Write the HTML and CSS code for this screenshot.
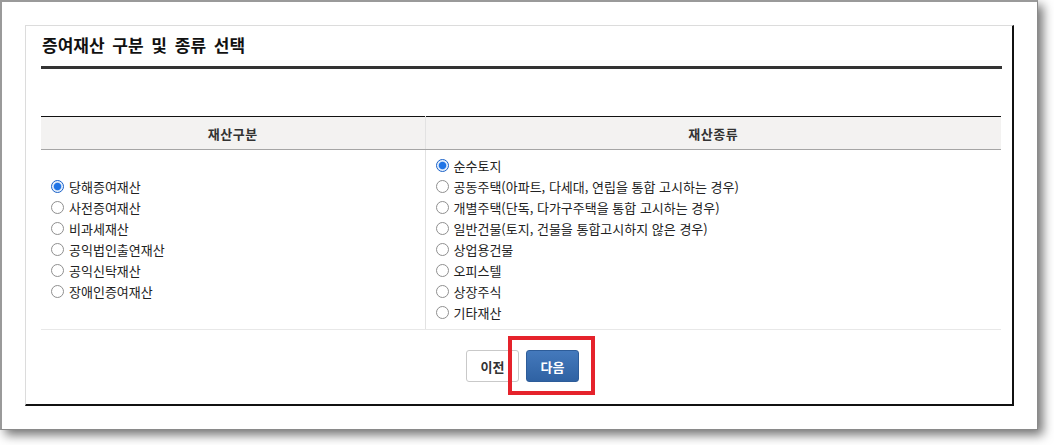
FILE: index.html
```html
<!DOCTYPE html>
<html lang="ko">
<head>
<meta charset="utf-8">
<title>증여재산 구분 및 종류 선택</title>
<link rel="stylesheet" href="styles.css">
</head>
<body>
<div class="window">
  <div class="panel">
    <h2 class="title">증여재산 구분 및 종류 선택</h2>
    <div class="spacer"></div>
    <table class="grid">
      <colgroup>
        <col class="c-left">
        <col class="c-right">
      </colgroup>
      <thead>
        <tr>
          <th class="col-left">재산구분</th>
          <th class="col-right">재산종류</th>
        </tr>
      </thead>
      <tbody>
        <tr>
          <td class="col-left">
            <ul class="opts">
              <li><label><input type="radio" name="gubun" checked><span>당해증여재산</span></label></li>
              <li><label><input type="radio" name="gubun"><span>사전증여재산</span></label></li>
              <li><label><input type="radio" name="gubun"><span>비과세재산</span></label></li>
              <li><label><input type="radio" name="gubun"><span>공익법인출연재산</span></label></li>
              <li><label><input type="radio" name="gubun"><span>공익신탁재산</span></label></li>
              <li><label><input type="radio" name="gubun"><span>장애인증여재산</span></label></li>
            </ul>
          </td>
          <td class="col-right">
            <ul class="opts">
              <li><label><input type="radio" name="jongryu" checked><span>순수토지</span></label></li>
              <li><label><input type="radio" name="jongryu"><span>공동주택(아파트, 다세대, 연립을 통합 고시하는 경우)</span></label></li>
              <li><label><input type="radio" name="jongryu"><span>개별주택(단독, 다가구주택을 통합 고시하는 경우)</span></label></li>
              <li><label><input type="radio" name="jongryu"><span>일반건물(토지, 건물을 통합고시하지 않은 경우)</span></label></li>
              <li><label><input type="radio" name="jongryu"><span>상업용건물</span></label></li>
              <li><label><input type="radio" name="jongryu"><span>오피스텔</span></label></li>
              <li><label><input type="radio" name="jongryu"><span>상장주식</span></label></li>
              <li><label><input type="radio" name="jongryu"><span>기타재산</span></label></li>
            </ul>
          </td>
        </tr>
      </tbody>
    </table>
    <div class="actions">
      <button class="btn btn-prev" type="button">이전</button>
      <button class="btn btn-next" type="button">다음</button>
      <span class="highlight"></span>
    </div>
  </div>
</div>
</body>
</html>
```

FILE: styles.css
```css
html, body {
  margin: 0;
  padding: 0;
  background: #ffffff;
}

body {
  font-family: "Noto Sans CJK KR", "Noto Sans", sans-serif;
  color: #333;
  width: 1054px;
  height: 445px;
  overflow: hidden;
}

.window {
  box-sizing: border-box;
  width: 1038px;
  height: 430px;
  background: #fff;
  border-top: 2px solid #9a9a9a;
  border-left: 2px solid #9a9a9a;
  border-right: 1px solid #8a8a8a;
  border-bottom: 1px solid #8a8a8a;
  box-shadow: 5px 5px 10px rgba(0, 0, 0, 0.55);
  padding: 23px 0 0 23px;
}

.panel {
  box-sizing: border-box;
  width: 989px;
  height: 381px;
  border-top: 1px solid #dcdcdc;
  border-left: 1px solid #dcdcdc;
  border-right: 2px solid #111;
  border-bottom: 2px solid #111;
  padding: 0 10px 0 15px;
  display: flex;
  flex-direction: column;
}

.title {
  margin: 0;
  padding: 7px 0 0 1px;
  height: 33px;
  font-size: 17px;
  font-weight: bold;
  color: #111;
  line-height: 24px;
  border-bottom: 3px solid #333;
  word-spacing: 3px;
}

.spacer {
  height: 47px;
}

.grid {
  width: 960px;
  table-layout: fixed;
  border-collapse: collapse;
  border-top: 1px solid #111;
  font-size: 13px;
}

.grid .c-left {
  width: 384px;
}

.grid th {
  height: 32px;
  padding: 0;
  background: #f3f2f1;
  border-bottom: 1px solid #a5a5a5;
  font-size: 13px;
  font-weight: bold;
  color: #333;
  letter-spacing: 0.5px;
}

.grid .col-left {
  border-right: 1px solid #e2e2e2;
}

.grid td {
  padding: 5px 0 6px 0;
  vertical-align: middle;
  border-bottom: 1px solid #e8e8e8;
}

.grid td.col-left {
  padding-left: 10px;
}

.grid td.col-right {
  padding-left: 10px;
}

.opts {
  list-style: none;
  margin: 0;
  padding: 0;
}

.opts li {
  height: 21px;
  display: flex;
  align-items: center;
}

.opts label {
  display: flex;
  align-items: center;
  gap: 5px;
  color: #222;
  font-size: 13px;
  line-height: 21px;
}

.opts input {
  appearance: none;
  -webkit-appearance: none;
  box-sizing: border-box;
  width: 13px;
  height: 13px;
  margin: 0;
  border: 1px solid #8f8f8f;
  border-radius: 50%;
  background: #fff;
}

.opts input:checked {
  border-color: #1a62c8;
  background: radial-gradient(circle, #1f74e6 0, #1f74e6 3.3px, #d6e6fb 4.2px, #e9f1fc 5px);
}

.actions {
  position: relative;
  display: flex;
  justify-content: center;
  gap: 7px;
  padding: 20px 0 0 2px;
}

.btn {
  box-sizing: border-box;
  width: 53px;
  height: 32px;
  border-radius: 3px;
  font-family: "Noto Sans CJK KR", "Noto Sans", sans-serif;
  font-size: 13px;
  font-weight: bold;
  padding: 0;
  cursor: pointer;
}

.btn-prev {
  background: #fff;
  border: 1px solid #c9c9c9;
  color: #333;
}

.btn-next {
  background: linear-gradient(#4479bc, #2f62a3);
  border: 1px solid #2d5c99;
  color: #fff;
}

.highlight {
  position: absolute;
  left: 467px;
  top: 6px;
  width: 87px;
  height: 59px;
  box-sizing: border-box;
  border: 4px solid #e5222b;
  pointer-events: none;
}
```
